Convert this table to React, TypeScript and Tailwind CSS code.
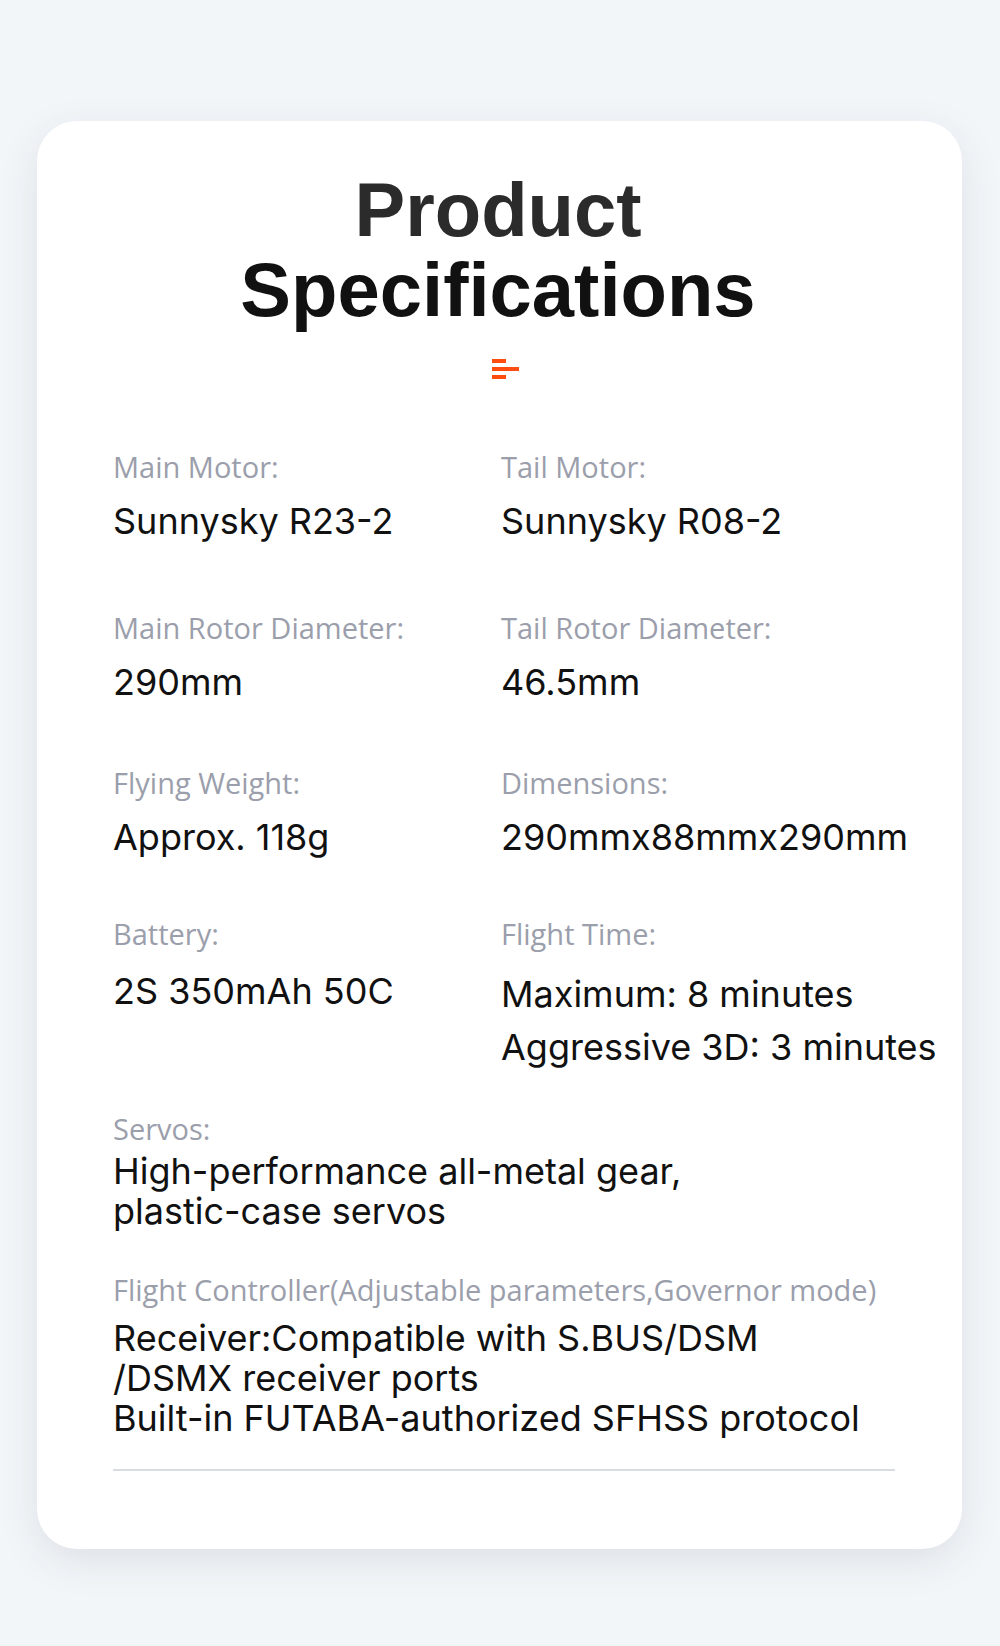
import React from "react";

const labelCls =
  "text-[29px] leading-[36px] text-[#9b9eab] whitespace-nowrap";
const valueCls =
  "text-[36px] leading-[40px] text-[#111111] whitespace-nowrap";
const labelFont = { fontFamily: '"Open Sans", "Noto Sans", sans-serif' };
const valueFont = { fontFamily: 'Inter, "Noto Sans", sans-serif' };

function Cell({ label, value, gap = "mt-[16px]" }: { label: string; value: string; gap?: string }) {
  return (
    <div className="flex flex-col">
      <div className={labelCls} style={labelFont}>{label}</div>
      <div className={`${gap} ${valueCls}`} style={valueFont}>{value}</div>
    </div>
  );
}

export default function App() {
  return (
    <div className="w-[1000px] h-[1646px] bg-[#f3f6f9] pt-[121px] pl-[37px]">
      <div className="w-[925px] h-[1428px] bg-white rounded-[40px] shadow-[0_12px_40px_rgba(30,40,60,0.10)] pt-[49px] pl-[76px] flex flex-col">
        <h1
          className="w-[782px] text-center font-bold text-[76px] leading-[80px] ml-[-6px]"
          style={{ fontFamily: '"Liberation Sans", Arial, sans-serif' }}
        >
          <span className="block text-[#2b2b2b]">Product</span>
          <span className="block text-[#111111]">Specifications</span>
        </h1>
        <div className="mt-[29px] ml-[379px] flex flex-col gap-[4px]">
          <div className="w-[14px] h-[4px] bg-[#ff4d12]" />
          <div className="w-[27px] h-[4px] bg-[#ff4d12]" />
          <div className="w-[14px] h-[4px] bg-[#ff4d12]" />
        </div>

        <div className="mt-[70px] grid grid-cols-[388px_1fr]">
          <Cell label="Main Motor:" value="Sunnysky R23-2" />
          <Cell label="Tail Motor:" value="Sunnysky R08-2" />
        </div>
        <div className="mt-[69px] grid grid-cols-[388px_1fr]">
          <Cell label="Main Rotor Diameter:" value="290mm" />
          <Cell label="Tail Rotor Diameter:" value="46.5mm" />
        </div>
        <div className="mt-[63px] grid grid-cols-[388px_1fr]">
          <Cell label="Flying Weight:" value="Approx. 118g" />
          <Cell label="Dimensions:" value="290mmx88mmx290mm" />
        </div>
        <div className="mt-[59px] grid grid-cols-[388px_1fr]">
          <Cell label="Battery:" value="2S 350mAh 50C" gap="mt-[19px]" />
          <div className="flex flex-col">
            <div className={labelCls} style={labelFont}>Flight Time:</div>
            <div
              className="mt-[16px] text-[36px] leading-[53px] text-[#111111] whitespace-nowrap"
              style={valueFont}
            >
              <div>Maximum: 8 minutes</div>
              <div>Aggressive 3D: 3 minutes</div>
            </div>
          </div>
        </div>

        <div className="mt-[37px] flex flex-col">
          <div className={labelCls} style={labelFont}>Servos:</div>
          <div
            className="mt-[4px] text-[36px] leading-[40px] text-[#111111] whitespace-nowrap"
            style={valueFont}
          >
            <div>High-performance all-metal gear,</div>
            <div>plastic-case servos</div>
          </div>
        </div>

        <div className="mt-[41px] flex flex-col">
          <div className={labelCls} style={labelFont}>
            Flight Controller(Adjustable parameters,Governor mode)
          </div>
          <div
            className="mt-[10px] text-[36px] leading-[40px] text-[#111111] whitespace-nowrap"
            style={valueFont}
          >
            <div>Receiver:Compatible with S.BUS/DSM</div>
            <div>/DSMX receiver ports</div>
            <div>Built-in FUTABA-authorized SFHSS protocol</div>
          </div>
        </div>

        <div className="mt-[31px] w-[782px] h-[2px] bg-[#d9dce3]" />
      </div>
    </div>
  );
}
